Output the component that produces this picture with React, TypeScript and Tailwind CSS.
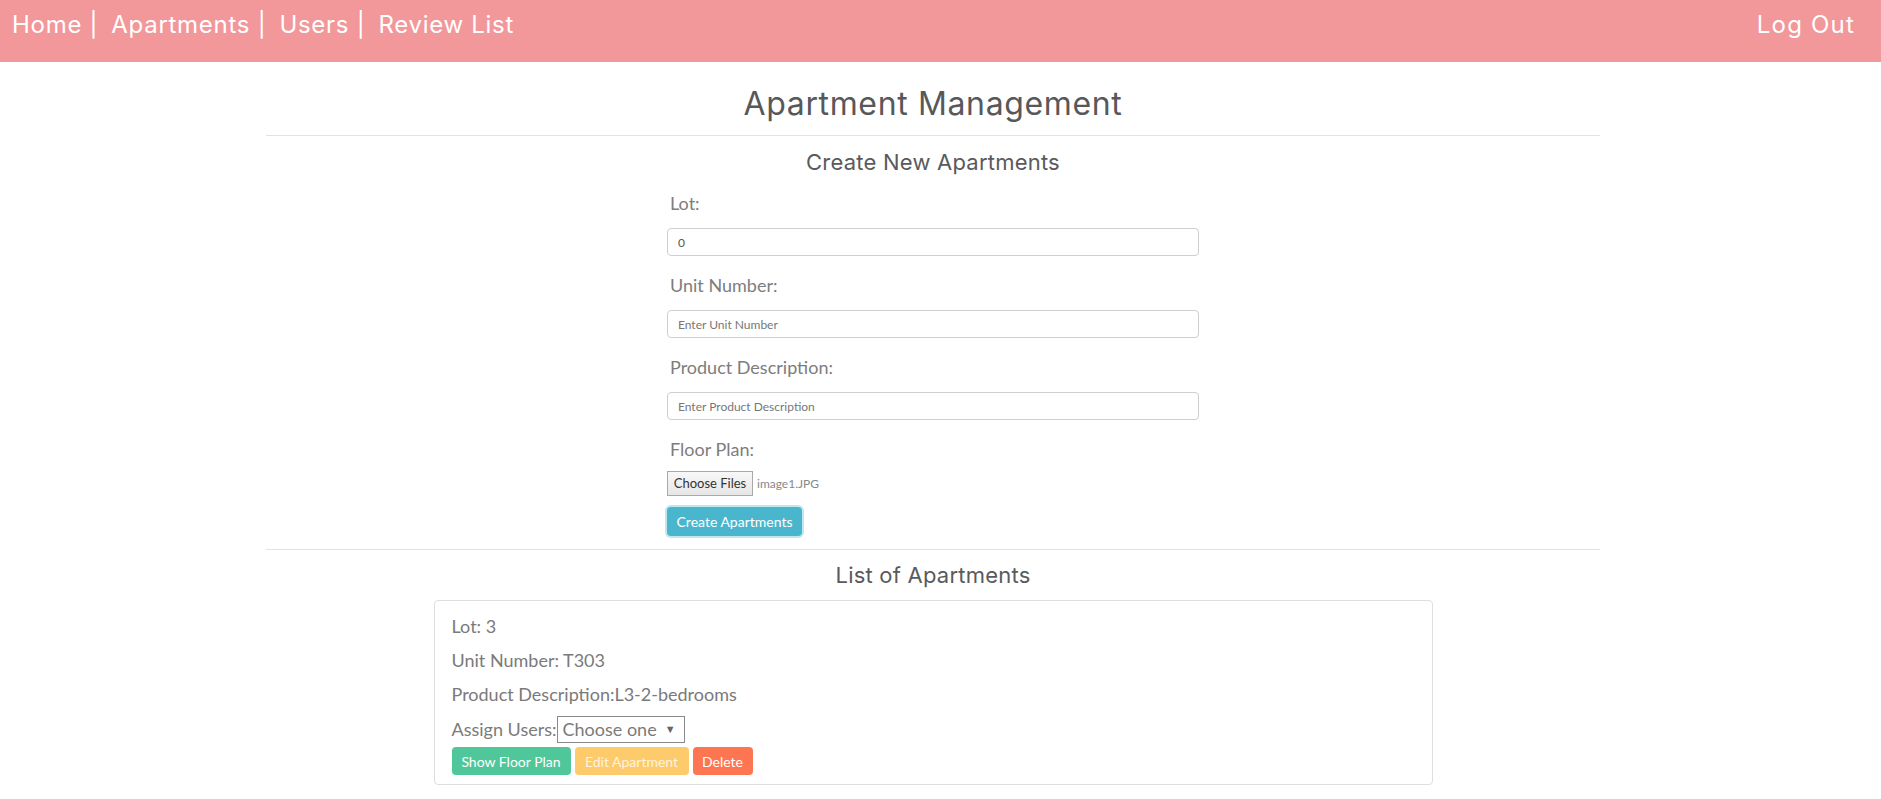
import React from 'react';

const heading = { fontFamily: 'Inter, "DejaVu Sans", sans-serif' };
const body = { fontFamily: 'Lato, "Open Sans", sans-serif' };

function Field({ label, value, placeholder }: { label: string; value?: string; placeholder?: string }) {
  return (
    <div className="mb-[16px]">
      <label className="block h-[26px] pl-[3px] text-[18px] leading-[26px] text-[#7d7d7d]">{label}</label>
      <input
        readOnly
        defaultValue={value}
        placeholder={placeholder}
        className="mt-[12px] block h-[28px] w-full rounded-[4px] border border-[#cfcfcf] bg-white px-[10px] text-[12px] text-[#555] placeholder:text-[#777] outline-none"
      />
    </div>
  );
}

export default function App() {
  return (
    <div className="min-h-screen bg-white" style={body}>
      <nav
        className="flex h-[62px] items-start justify-between bg-[#f2979a] pl-[12px] pr-[26px] pt-[9px] text-[24px] leading-[32px] tracking-[0.03em] text-white"
        style={heading}
      >
        <div className="flex gap-[13px]">
          <a>Home |</a>
          <a>Apartments |</a>
          <a>Users |</a>
          <a>Review List</a>
        </div>
        <a className="tracking-[0.05em]">Log Out</a>
      </nav>

      <main className="w-[1866px]">
        <div className="mx-auto w-[1334px]">
          <h1
            className="mt-[22px] text-center text-[32px] leading-[40px] font-normal tracking-[0.02em] text-[#58585a]"
            style={heading}
          >
            Apartment Management
          </h1>
          <hr className="mt-[11px] border-t border-[#e2e2e2]" />
          <h3 className="mt-[11px] text-center text-[22px] leading-[30px] tracking-[0.01em] text-[#5a5a5c]" style={heading}>
            Create New Apartments
          </h3>

          <form className="mx-auto mt-[13px] w-[532px]">
            <Field label="Lot:" value="0" />
            <Field label="Unit Number:" placeholder="Enter Unit Number" />
            <Field label="Product Description:" placeholder="Enter Product Description" />
            <label className="block h-[26px] pl-[3px] text-[18px] leading-[26px] text-[#7d7d7d]">Floor Plan:</label>
            <div className="mt-[9px] flex h-[25px] items-center gap-[4px]">
              <button
                type="button"
                className="h-[25px] w-[86px] border border-[#a9a9a9] bg-gradient-to-b from-[#f8f8f8] to-[#e6e6e6] text-[13px] text-[#333]"
              >
                Choose Files
              </button>
              <span className="text-[12px] text-[#888]">image1.JPG</span>
            </div>
            <button
              type="button"
              className="mt-[11px] block h-[29px] w-[135px] rounded-[4px] bg-[#4ab6cd] text-[14px] text-white shadow-[0_0_0_2px_rgba(74,182,205,0.35)]"
            >
              Create Apartments
            </button>
          </form>

          <hr className="mt-[13px] border-t border-[#e2e2e2]" />
          <h3 className="mt-[10px] text-center text-[22px] leading-[30px] tracking-[0.01em] text-[#5a5a5c]" style={heading}>
            List of Apartments
          </h3>

          <div className="mx-auto mt-[10px] w-[999px] rounded-[4px] border border-[#dedede] px-[17px] pb-[9px] pt-[8px] text-[18px] text-[#7a7a7a]">
            <p className="leading-[34px]">Lot: 3</p>
            <p className="leading-[34px]">Unit Number: T303</p>
            <p className="leading-[34px]">Product Description:L3-2-bedrooms</p>
            <div className="mt-[5px] flex h-[27px] items-center">
              <span>Assign Users:</span>
              <div className="flex h-[27px] w-[128px] items-center justify-between whitespace-nowrap border border-[#8a8a8a] bg-white pl-[5px] pr-[8px]">
                <span>Choose one</span>
                <span className="text-[11px] text-[#666]">▼</span>
              </div>
            </div>
            <div className="mt-[4px] flex gap-[4px] text-[14px] text-white">
              <button type="button" className="h-[28px] w-[119px] rounded-[4px] bg-[#50c79a]">Show Floor Plan</button>
              <button type="button" className="h-[28px] w-[114px] rounded-[4px] bg-[#fdcb6b] text-[#fff4dc]">Edit Apartment</button>
              <button type="button" className="h-[28px] w-[60px] rounded-[4px] bg-[#fd7551]">Delete</button>
            </div>
          </div>
        </div>
      </main>
    </div>
  );
}
